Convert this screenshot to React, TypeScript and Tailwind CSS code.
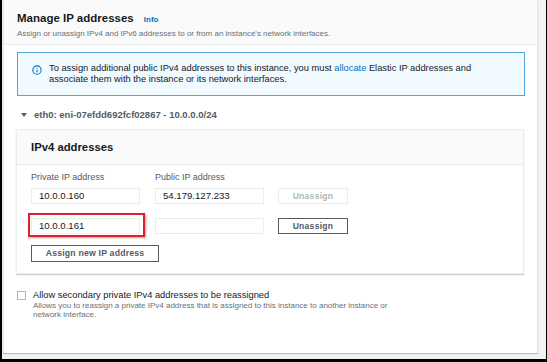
import { Info } from "lucide-react";

const font = { fontFamily: '"Liberation Sans", Arial, sans-serif' };

function IpRow({
  priv,
  pub,
  disabled,
  highlight,
}: {
  priv: string;
  pub: string;
  disabled?: boolean;
  highlight?: boolean;
}) {
  return (
    <div className="flex items-center h-[16px]">
      <div className="relative w-[109px] h-[16px]">
        {highlight && (
          <div className="absolute -left-[3px] -top-[5px] w-[117px] h-[24px] border-2 border-[#e0202a] shadow-[1px_1px_2px_rgba(0,0,0,0.35)]" />
        )}
        <div className="w-full h-full border border-[#eaeded] bg-white px-[7px] text-[9.6px] leading-[14px] text-[#16191f]">
          {priv}
        </div>
      </div>
      <div className="ml-[15px] w-[109px] h-[16px] border border-[#eaeded] bg-white px-[7px] text-[9.6px] leading-[14px] text-[#16191f]">
        {pub}
      </div>
      <button
        className={`ml-[14px] w-[70px] h-[16px] text-[8.5px] font-bold leading-none tracking-[0.3px] ${
          disabled
            ? "border border-[#eaeded] text-[#aab7b8]"
            : "border border-[#545b64] text-[#545b64]"
        }`}
      >
        Unassign
      </button>
    </div>
  );
}

export default function App() {
  return (
    <div
      style={font}
      className="w-[547px] h-[362px] overflow-hidden bg-[#f2f3f3] border-l-2 border-r border-b-[3px] border-black flex flex-col"
    >
      <div className="ml-px mr-[8px] h-[353px] bg-white border-l border-r border-[#e4e7e8] shadow-[0_1px_1px_#b8c1c2] flex flex-col">
        {/* header */}
        <div className="h-[45px] bg-[#fafafa] border-b border-[#eaeded] px-[13px] pt-[11px]">
          <div className="flex items-baseline">
            <h2 className="text-[11.5px] leading-[14px] font-bold text-[#16191f]">Manage IP addresses</h2>
            <span className="ml-[10px] text-[8px] font-bold text-[#0073bb]">Info</span>
          </div>
          <p className="mt-[3px] text-[8px] leading-[10px] text-[#687078]">
            Assign or unassign IPv4 and IPv6 addresses to or from an instance's network interfaces.
          </p>
        </div>

        <div className="px-[13px] pt-[7px]">
          {/* info alert */}
          <div className="h-[44px] w-[508px] border border-[#4fa8dc] bg-[#f1faff] flex items-start pl-[14px] pt-[10px]">
            <Info className="w-[10px] h-[10px] mt-[2px] text-[#0073bb]" strokeWidth={2.6} />
            <p className="ml-[7px] text-[9.3px] leading-[11px] text-[#16191f]">
              To assign additional public IPv4 addresses to this instance, you must{" "}
              <span className="text-[#0073bb]">allocate</span> Elastic IP addresses and
              <br />
              associate them with the instance or its network interfaces.
            </p>
          </div>

          {/* eni toggle */}
          <div className="mt-[14px] flex items-center pl-[4px] h-[10px]">
            <span className="w-0 h-0 border-l-[3.5px] border-r-[3.5px] border-t-[4px] border-l-transparent border-r-transparent border-t-[#545b64]" />
            <span className="ml-[7px] text-[9.5px] font-bold text-[#545b64]">
              eth0: eni-07efdd692fcf02867 - 10.0.0.0/24
            </span>
          </div>

          {/* IPv4 container */}
          <div className="mt-[9px] w-[508px] -ml-px border border-[#eaeded] shadow-[0_1px_1px_#c8d0d1]">
            <div className="h-[35px] bg-[#fafafa] border-b border-[#eaeded] flex items-center px-[14px]">
              <h3 className="text-[11.3px] font-bold text-[#16191f]">IPv4 addresses</h3>
            </div>
            <div className="px-[14px] pt-[7px] pb-[10px]">
              <div className="flex text-[9px] text-[#545b64] leading-[10px]">
                <span className="w-[124px]">Private IP address</span>
                <span>Public IP address</span>
              </div>
              <div className="mt-[6px] flex flex-col gap-[14px]">
                <IpRow priv="10.0.0.160" pub="54.179.127.233" disabled />
                <IpRow priv="10.0.0.161" pub="" highlight />
              </div>
              <button className="mt-[11px] w-[128px] h-[17px] border border-[#545b64] text-[8.7px] font-bold text-[#545b64] tracking-[0.2px]">
                Assign new IP address
              </button>
            </div>
          </div>

          {/* checkbox */}
          <div className="mt-[16px] flex items-start">
            <span className="mt-[1px] w-[9px] h-[9px] border border-[#aab7b8] bg-white shrink-0" />
            <div className="ml-[7px]">
              <div className="text-[9.3px] leading-[11px] text-[#16191f]">
                Allow secondary private IPv4 addresses to be reassigned
              </div>
              <div className="text-[8px] leading-[9px] text-[#687078] w-[370px]">
                Allows you to reassign a private IPv4 address that is assigned to this instance to another instance or network interface.
              </div>
            </div>
          </div>
        </div>
      </div>
    </div>
  );
}
